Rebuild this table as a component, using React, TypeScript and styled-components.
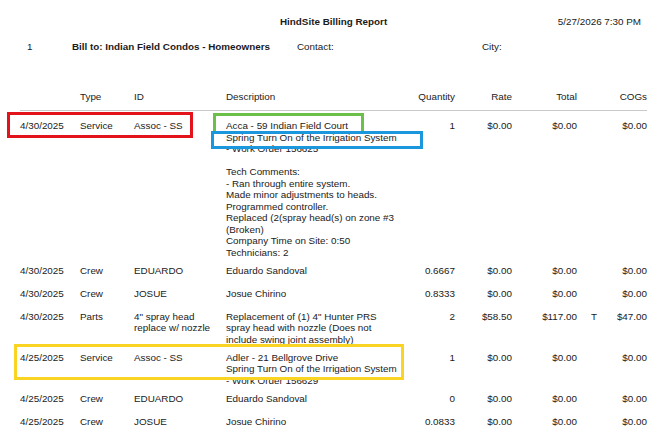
import React from "react";
import styled, { createGlobalStyle } from "styled-components";

const GlobalStyle = createGlobalStyle`
  html, body {
    margin: 0;
    padding: 0;
    background: #ffffff;
    overflow: hidden;
  }
  body {
    font-family: "Liberation Sans", Arial, sans-serif;
    font-size: 9.85px;
    color: #1a1a1a;
  }
`;

const Page = styled.div`
  position: relative;
  width: 670px;
  height: 434px;
  box-sizing: border-box;
  padding-top: 16px;
  line-height: 11.5px;
  background: #ffffff;
`;

const TitleBar = styled.div`
  display: grid;
  grid-template-columns: 280px 1fr auto;
  padding-right: 29px;
`;

const Title = styled.div`
  grid-column: 2;
  font-weight: 700;
`;

const Stamp = styled.div`
  grid-column: 3;
`;

const BillRow = styled.div`
  display: grid;
  grid-template-columns: 45px 225px 185px auto;
  padding-left: 27px;
  margin-top: 13.5px;
`;

const Bold = styled.span`
  font-weight: 700;
`;

const columns = "60px 54px 92px 184px 45px 57px 65px 30px 40px";

const HeaderRow = styled.div`
  display: grid;
  grid-template-columns: ${columns};
  margin-left: 20px;
  margin-right: 23px;
  margin-top: 38.5px;
  padding-bottom: 7.25px;
  border-bottom: 1px solid #c9c9c9;
  padding-left: 0;
`;

const Body = styled.div`
  padding-top: 9.25px;
  margin-left: 20px;
  margin-right: 23px;
`;

const Row = styled.div`
  display: grid;
  grid-template-columns: ${columns};
  box-sizing: border-box;
  min-height: 23px;
  padding-bottom: 6.5px;
`;

const Cell = styled.div<{ $align?: "left" | "right" }>`
  text-align: ${(p) => p.$align ?? "left"};
  white-space: nowrap;
`;

const FlagCell = styled.div`
  padding-left: 14px;
`;

const HeadCell = styled(Cell)`
  color: #222;
`;

const Line = styled.div`
  min-height: 11.5px;
`;

const Mark = styled.div<{ $color: string }>`
  position: absolute;
  box-sizing: border-box;
  border: 3px solid ${(p) => p.$color};
  pointer-events: none;
`;

type Entry = {
  date: string;
  type: string;
  id: string[];
  desc: string[];
  qty: string;
  rate: string;
  total: string;
  flag?: string;
  cogs: string;
};

const entries: Entry[] = [
  {
    date: "4/30/2025",
    type: "Service",
    id: ["Assoc - SS"],
    desc: [
      "Acca - 59 Indian Field Court",
      "Spring Turn On of the Irrigation System",
      "- Work Order 156625",
      "",
      "Tech Comments:",
      "- Ran through entire system.",
      "Made minor adjustments to heads.",
      "Programmed controller.",
      "Replaced (2(spray head(s) on zone #3",
      "(Broken)",
      "Company Time on Site: 0:50",
      "Technicians: 2",
    ],
    qty: "1",
    rate: "$0.00",
    total: "$0.00",
    cogs: "$0.00",
  },
  {
    date: "4/30/2025",
    type: "Crew",
    id: ["EDUARDO"],
    desc: ["Eduardo Sandoval"],
    qty: "0.6667",
    rate: "$0.00",
    total: "$0.00",
    cogs: "$0.00",
  },
  {
    date: "4/30/2025",
    type: "Crew",
    id: ["JOSUE"],
    desc: ["Josue Chirino"],
    qty: "0.8333",
    rate: "$0.00",
    total: "$0.00",
    cogs: "$0.00",
  },
  {
    date: "4/30/2025",
    type: "Parts",
    id: ["4\" spray head", "replace w/ nozzle"],
    desc: [
      "Replacement of (1) 4\" Hunter PRS",
      "spray head with nozzle (Does not",
      "include swing joint assembly)",
    ],
    qty: "2",
    rate: "$58.50",
    total: "$117.00",
    flag: "T",
    cogs: "$47.00",
  },
  {
    date: "4/25/2025",
    type: "Service",
    id: ["Assoc - SS"],
    desc: [
      "Adler - 21 Bellgrove Drive",
      "Spring Turn On of the Irrigation System",
      "- Work Order 156629",
    ],
    qty: "1",
    rate: "$0.00",
    total: "$0.00",
    cogs: "$0.00",
  },
  {
    date: "4/25/2025",
    type: "Crew",
    id: ["EDUARDO"],
    desc: ["Eduardo Sandoval"],
    qty: "0",
    rate: "$0.00",
    total: "$0.00",
    cogs: "$0.00",
  },
  {
    date: "4/25/2025",
    type: "Crew",
    id: ["JOSUE"],
    desc: ["Josue Chirino"],
    qty: "0.0833",
    rate: "$0.00",
    total: "$0.00",
    cogs: "$0.00",
  },
];

const Lines: React.FC<{ lines: string[] }> = ({ lines }) => (
  <>
    {lines.map((l, i) => (
      <Line key={i}>{l}</Line>
    ))}
  </>
);

export default function App() {
  return (
    <>
      <GlobalStyle />
      <Page>
        <TitleBar>
          <Title>HindSite Billing Report</Title>
          <Stamp>5/27/2026 7:30 PM</Stamp>
        </TitleBar>
        <BillRow>
          <div>1</div>
          <Bold>Bill to: Indian Field Condos - Homeowners</Bold>
          <div>Contact:</div>
          <div>City:</div>
        </BillRow>
        <HeaderRow>
          <HeadCell />
          <HeadCell>Type</HeadCell>
          <HeadCell>ID</HeadCell>
          <HeadCell>Description</HeadCell>
          <HeadCell $align="right">Quantity</HeadCell>
          <HeadCell $align="right">Rate</HeadCell>
          <HeadCell $align="right">Total</HeadCell>
          <HeadCell />
          <HeadCell $align="right">COGs</HeadCell>
        </HeaderRow>
        <Body>
          {entries.map((e, i) => (
            <Row key={i}>
              <Cell>{e.date}</Cell>
              <Cell>{e.type}</Cell>
              <Cell>
                <Lines lines={e.id} />
              </Cell>
              <Cell>
                <Lines lines={e.desc} />
              </Cell>
              <Cell $align="right">{e.qty}</Cell>
              <Cell $align="right">{e.rate}</Cell>
              <Cell $align="right">{e.total}</Cell>
              <FlagCell>{e.flag ?? ""}</FlagCell>
              <Cell $align="right">{e.cogs}</Cell>
            </Row>
          ))}
        </Body>
        <Mark $color="#e3131b" style={{ left: 7, top: 112, width: 186, height: 26 }} />
        <Mark $color="#6cc04a" style={{ left: 213, top: 113, width: 151, height: 21 }} />
        <Mark $color="#1b98dd" style={{ left: 211, top: 131, width: 212, height: 18 }} />
        <Mark $color="#f9d423" style={{ left: 14, top: 344, width: 390, height: 36 }} />
      </Page>
    </>
  );
}
